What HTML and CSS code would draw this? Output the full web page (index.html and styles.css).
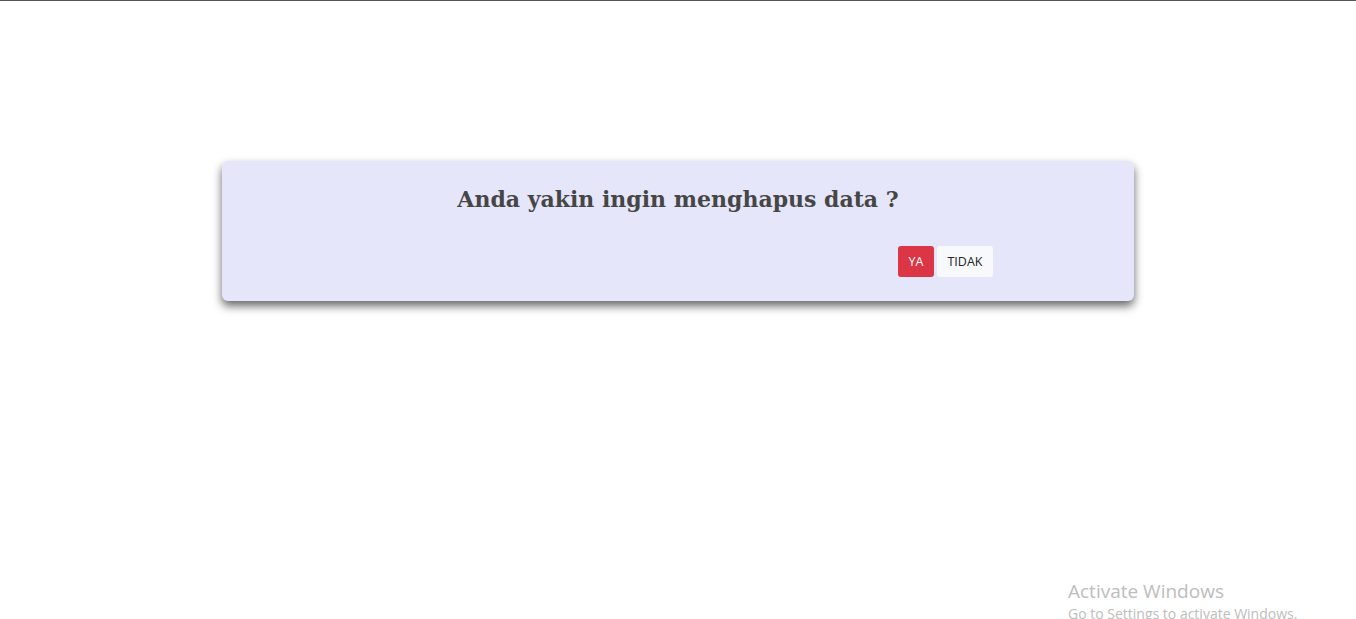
FILE: index.html
```html
<!DOCTYPE html>
<html>
<head>
<meta charset="utf-8">
<link rel="stylesheet" href="styles.css">
</head>
<body>
<div class="topline"></div>
<div class="dialog">
  <h2 class="title">Anda yakin ingin menghapus data ?</h2>
  <div class="actions">
    <button class="btn btn-yes">YA</button>
    <button class="btn btn-no">TIDAK</button>
  </div>
</div>
<div class="watermark">
  <div class="wm-title">Activate Windows</div>
  <div class="wm-sub">Go to Settings to activate Windows.</div>
</div>
</body>
</html>
```
FILE: styles.css
```css
html, body {
  margin: 0;
  padding: 0;
  background: #ffffff;
  height: 100%;
  overflow: hidden;
}
.topline {
  height: 1px;
  background: #555555;
}
.dialog {
  width: 912px;
  height: 140px;
  box-sizing: border-box;
  margin: 160px auto 0;
  background: #e6e6fa;
  border-radius: 6px;
  box-shadow: 0 5px 10px rgba(0, 0, 0, 0.6);
  padding-top: 22px;
}
.title {
  margin: 0;
  text-align: center;
  font-family: "DejaVu Serif", Georgia, serif;
  font-weight: bold;
  font-size: 22px;
  line-height: 32px;
  color: #464646;
}
.actions {
  display: flex;
  justify-content: flex-end;
  gap: 3px;
  padding-right: 141px;
  margin-top: 31px;
}
.btn {
  font-family: "Open Sans", "Noto Sans", sans-serif;
  font-size: 12.5px;
  height: 31px;
  border: none;
  border-radius: 3px;
  padding: 0;
  cursor: pointer;
}
.btn-yes {
  background: #dc3545;
  color: #ffffff;
  width: 36px;
}
.btn-no {
  background: #f8f9fa;
  color: #212529;
  width: 56px;
}
.watermark {
  position: absolute;
  left: 1068px;
  top: 579px;
  font-family: "Open Sans", "Noto Sans", sans-serif;
  color: #bdbdbd;
  white-space: nowrap;
}
.wm-title {
  font-size: 19px;
  line-height: 25px;
}
.wm-sub {
  font-size: 14px;
  line-height: 20px;
}
```
